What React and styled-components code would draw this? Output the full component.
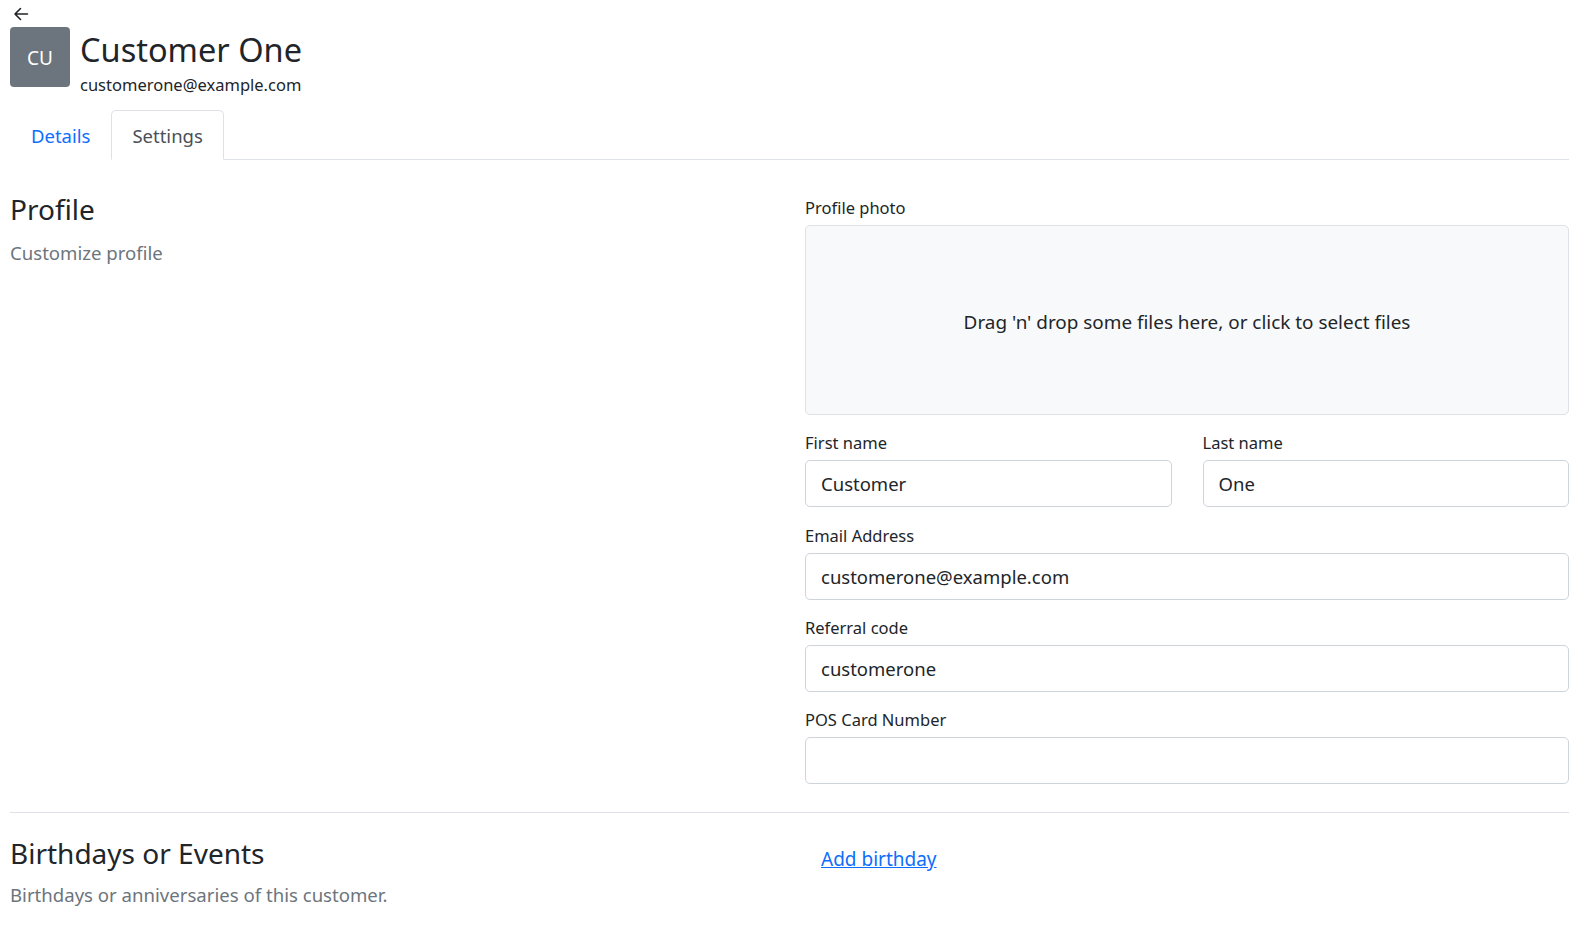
import React from "react";
import styled, { createGlobalStyle } from "styled-components";

const GlobalStyle = createGlobalStyle`
  html, body {
    margin: 0;
    padding: 0;
    background: #ffffff;
  }
  body {
    font-family: "Noto Sans", "Open Sans", sans-serif;
    color: #212529;
  }
  * {
    box-sizing: border-box;
  }
`;

const Page = styled.div`
  padding: 6px 8px 40px 10px;
`;

const BackButton = styled.button`
  display: block;
  border: 0;
  background: none;
  padding: 0;
  margin: 0 0 0 3px;
  height: 16px;
  color: #212529;
  cursor: pointer;
`;

const HeaderRow = styled.div`
  display: flex;
  align-items: flex-start;
  gap: 10px;
  margin-top: 5px;
`;

const Avatar = styled.div`
  width: 60px;
  height: 60px;
  border-radius: 4px;
  background: #6c757d;
  color: #ffffff;
  font-size: 19px;
  padding-top: 2px;
  display: flex;
  align-items: center;
  justify-content: center;
`;

const HeaderText = styled.div`
  display: flex;
  flex-direction: column;
`;

const Name = styled.h1`
  margin: 0;
  font-size: 32.5px;
  font-weight: 400;
  line-height: 46px;
`;

const Email = styled.div`
  font-size: 16.5px;
  line-height: 24px;
`;

const TabBar = styled.nav`
  display: flex;
  margin-top: 13px;
  border-bottom: 1px solid #dee2e6;
`;

const Tab = styled.a`
  display: block;
  height: 50px;
  padding: 0 20px;
  margin-bottom: -1px;
  font-size: 18.5px;
  line-height: 50px;
  text-decoration: none;
  border: 1px solid ${(p) => (p.$active ? "#dee2e6" : "transparent")};
  border-bottom-color: ${(p) => (p.$active ? "#ffffff" : "transparent")};
  border-radius: 5px 5px 0 0;
  background: #ffffff;
  color: ${(p) => (p.$active ? "#495057" : "#0d6efd")};
  cursor: pointer;
`;

const Section = styled.section`
  display: grid;
  grid-template-columns: 1fr 1fr;
  column-gap: 31px;
  padding: ${(p) => p.$pad};
  border-top: ${(p) => (p.$divider ? "1px solid #dee2e6" : "none")};
`;

const SectionHead = styled.div`
  margin-top: ${(p) => p.$offset || "0"};
`;

const SectionTitle = styled.h2`
  margin: 0;
  font-size: 28px;
  font-weight: 400;
  line-height: 38px;
`;

const SectionSub = styled.p`
  margin: ${(p) => p.$gap || "9px"} 0 0;
  font-size: 18.6px;
  line-height: 26px;
  color: #6c757d;
`;

const Fields = styled.div`
  display: flex;
  flex-direction: column;
  gap: 13.3px;
`;

const FieldRow = styled.div`
  display: grid;
  grid-template-columns: 1fr 1fr;
  column-gap: 31px;
`;

const Field = styled.div`
  display: flex;
  flex-direction: column;
`;

const Label = styled.label`
  font-size: 16.5px;
  line-height: 30px;
  margin-bottom: 2px;
`;

const Input = styled.input`
  height: 47px;
  width: 100%;
  padding: 0 15px;
  font-family: inherit;
  font-size: 18.5px;
  color: #212529;
  border: 1px solid #ced4da;
  border-radius: 5px;
  background: #ffffff;
  outline: none;
`;

const DropZone = styled.div`
  height: 190px;
  border: 1px solid #dee2e6;
  border-radius: 5px;
  background: #f8f9fa;
  display: flex;
  align-items: center;
  justify-content: center;
  padding-top: 3px;
  font-size: 18.9px;
  color: #212529;
  cursor: pointer;
`;

const LinkCell = styled.div`
  padding: 12px 0 0 16px;
`;

const TextLink = styled.a`
  font-size: 19px;
  color: #0d6efd;
  text-decoration: underline;
  cursor: pointer;
`;

const ArrowLeft = () => (
  <svg width="16" height="16" viewBox="0 0 16 16" fill="none" stroke="currentColor" strokeWidth="1.6" strokeLinecap="round" strokeLinejoin="round">
    <path d="M14.5 8H2M7.5 2.5 2 8l5.5 5.5" />
  </svg>
);

const customer = {
  initials: "CU",
  firstName: "Customer",
  lastName: "One",
  email: "customerone@example.com",
  referral: "customerone",
  posCard: "",
};

export default function App() {
  return (
    <Page>
      <GlobalStyle />
      <BackButton aria-label="Back">
        <ArrowLeft />
      </BackButton>
      <HeaderRow>
        <Avatar>{customer.initials}</Avatar>
        <HeaderText>
          <Name>
            {customer.firstName} {customer.lastName}
          </Name>
          <Email>{customer.email}</Email>
        </HeaderText>
      </HeaderRow>

      <TabBar>
        <Tab>Details</Tab>
        <Tab $active>Settings</Tab>
      </TabBar>

      <Section $pad="33px 0 28px">
        <SectionHead $offset="-3px">
          <SectionTitle>Profile</SectionTitle>
          <SectionSub $gap="12px">Customize profile</SectionSub>
        </SectionHead>
        <Fields>
          <Field>
            <Label>Profile photo</Label>
            <DropZone>Drag 'n' drop some files here, or click to select files</DropZone>
          </Field>
          <FieldRow>
            <Field>
              <Label>First name</Label>
              <Input defaultValue={customer.firstName} />
            </Field>
            <Field>
              <Label>Last name</Label>
              <Input defaultValue={customer.lastName} />
            </Field>
          </FieldRow>
          <Field>
            <Label>Email Address</Label>
            <Input defaultValue={customer.email} />
          </Field>
          <Field>
            <Label>Referral code</Label>
            <Input defaultValue={customer.referral} />
          </Field>
          <Field>
            <Label>POS Card Number</Label>
            <Input defaultValue={customer.posCard} />
          </Field>
        </Fields>
      </Section>

      <Section $divider $pad="21px 0 0">
        <SectionHead>
          <SectionTitle>Birthdays or Events</SectionTitle>
          <SectionSub $gap="10px">Birthdays or anniversaries of this customer.</SectionSub>
        </SectionHead>
        <LinkCell>
          <TextLink>Add birthday</TextLink>
        </LinkCell>
      </Section>
    </Page>
  );
}
